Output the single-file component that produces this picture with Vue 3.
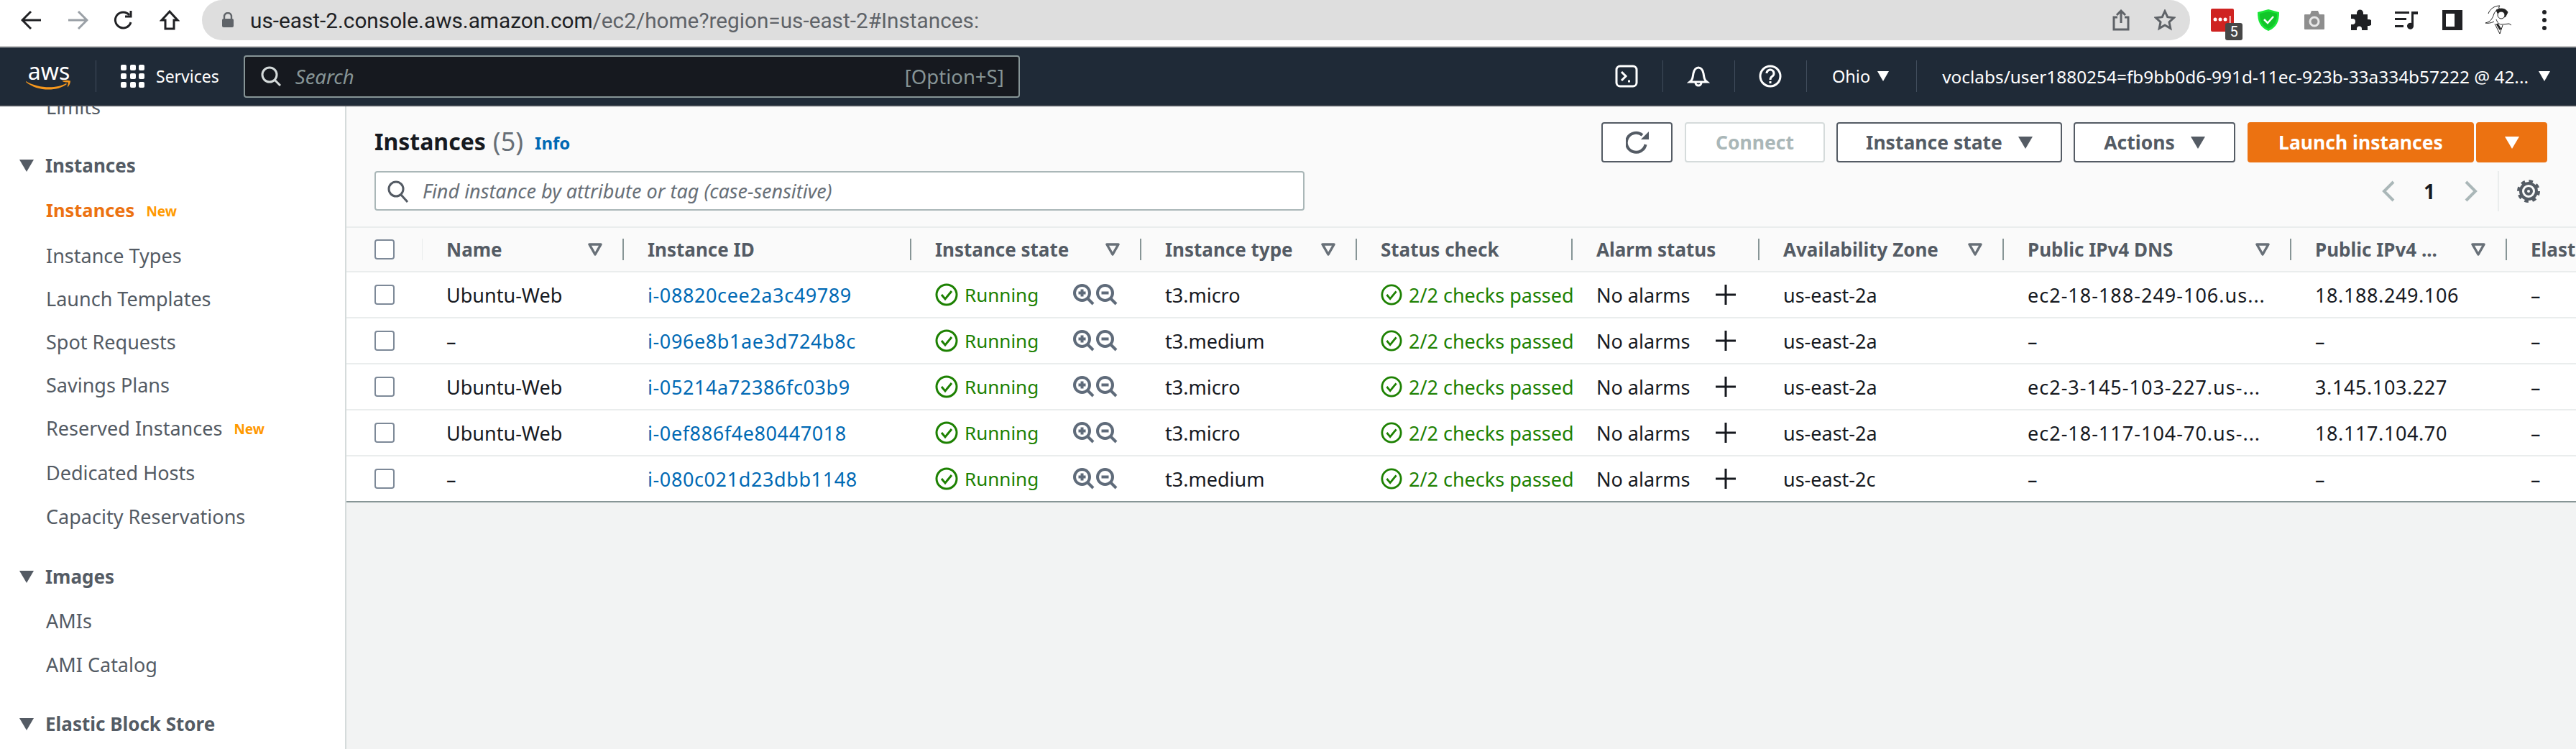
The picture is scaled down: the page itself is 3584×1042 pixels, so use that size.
<script setup>
const nav = [
  { t: 'Limits', k: 'item', m: -30 },
  { t: 'Instances', k: 'head', m: 22 },
  { t: 'Instances', k: 'item active', m: 2, isNew: true },
  { t: 'Instance Types', k: 'item', m: 3 },
  { t: 'Launch Templates', k: 'item', m: 0 },
  { t: 'Spot Requests', k: 'item', m: 0 },
  { t: 'Savings Plans', k: 'item', m: 0 },
  { t: 'Reserved Instances', k: 'item', m: 0, isNew: true },
  { t: 'Dedicated Hosts', k: 'item', m: 2 },
  { t: 'Capacity Reservations', k: 'item', m: 1 },
  { t: 'Images', k: 'head', m: 24 },
  { t: 'AMIs', k: 'item', m: 1 },
  { t: 'AMI Catalog', k: 'item', m: 1 },
  { t: 'Elastic Block Store', k: 'head', m: 23 },
]
const cols = [
  { t: 'Name', f: true },
  { t: 'Instance ID' },
  { t: 'Instance state', f: true },
  { t: 'Instance type', f: true },
  { t: 'Status check' },
  { t: 'Alarm status' },
  { t: 'Availability Zone', f: true },
  { t: 'Public IPv4 DNS', f: true },
  { t: 'Public IPv4 ...', f: true },
  { t: 'Elastic IP' },
]
const rows = [
  { name: 'Ubuntu-Web', id: 'i-08820cee2a3c49789', type: 't3.micro', az: 'us-east-2a', dns: 'ec2-18-188-249-106.us...', ip: '18.188.249.106' },
  { name: '–', id: 'i-096e8b1ae3d724b8c', type: 't3.medium', az: 'us-east-2a', dns: '–', ip: '–' },
  { name: 'Ubuntu-Web', id: 'i-05214a72386fc03b9', type: 't3.micro', az: 'us-east-2a', dns: 'ec2-3-145-103-227.us-...', ip: '3.145.103.227' },
  { name: 'Ubuntu-Web', id: 'i-0ef886f4e80447018', type: 't3.micro', az: 'us-east-2a', dns: 'ec2-18-117-104-70.us-...', ip: '18.117.104.70' },
  { name: '–', id: 'i-080c021d23dbb1148', type: 't3.medium', az: 'us-east-2c', dns: '–', ip: '–' },
]
</script>

<template>
  <div class="page">
    <div class="chrome">
      <div class="slot"><svg width="30" height="28" viewBox="0 0 30 28" class="ic"><path d="M28 14H3M14 2 2 14l12 12" /></svg></div>
      <div class="slot"><svg width="30" height="28" viewBox="0 0 30 28" class="ic dim"><path d="M2 14h25M16 2l12 12-12 12" /></svg></div>
      <div class="slot"><svg width="30" height="30" viewBox="0 0 30 30" class="ic"><path d="M25 18a11 11 0 1 1-2-10" /><path d="M25 2v8h-8" /></svg></div>
      <div class="slot"><svg width="28" height="30" viewBox="0 0 28 30" class="ic"><path d="M14 3 3 15h5v12h12V15h5z" /></svg></div>
      <div class="urlbar">
        <svg width="18" height="22" viewBox="0 0 18 22" class="lock"><path d="M4 9V6a5 5 0 0 1 10 0v3" fill="none" stroke="#5f6368" stroke-width="2.4" /><rect x="1" y="9" width="16" height="12" rx="2" fill="#5f6368" /></svg>
        <span class="url"><span class="host">us-east-2.console.aws.amazon.com</span>/ec2/home?region=us-east-2#Instances:</span>
        <span class="grow"></span>
        <svg width="26" height="30" viewBox="0 0 26 30" class="ic gray"><path d="M8 11H3v17h20V11h-5M13 19V2M7 8l6-6 6 6" /></svg>
        <svg width="30" height="30" viewBox="0 0 30 30" class="ic gray star"><path d="m15 2.500 3.700 8.200 8.800 1-6.500 6 1.800 8.800L15 22l-7.800 4.500L9 17.700l-6.500-6 8.800-1z" /></svg>
      </div>
      <div class="ext">
        <div class="slot">
          <div class="lp">
            <svg width="32" height="32" viewBox="0 0 32 32" fill="#fff"><circle cx="6" cy="15" r="2.500" /><circle cx="13" cy="15" r="2.500" /><circle cx="20" cy="15" r="2.500" /><rect x="26" y="10" width="1.500" height="10" /></svg>
            <span class="badge">5</span>
          </div>
        </div>
        <div class="slot"><svg width="32" height="32" viewBox="0 0 32 32"><path d="M16 1 31 5c0 12-3 21-15 26C4 26 1 17 1 5z" fill="#19e637" /><path d="M16 4 28 7c0 10-3 17-12 21C7 24 4 17 4 7z" fill="#12c52a" /><path d="m10 15 5 5 8-9" fill="none" stroke="#fff" stroke-width="2.500" /></svg></div>
        <div class="slot"><svg width="30" height="28" viewBox="0 0 30 28"><path d="M2 6h7l2-5h9l2 5h6a1 1 0 0 1 1 1v19a1 1 0 0 1-1 1H2a1 1 0 0 1-1-1V7a1 1 0 0 1 1-1z" fill="#8e8e8e" /><circle cx="15" cy="16" r="6" fill="none" stroke="#e8e8e8" stroke-width="3" /></svg></div>
        <div class="slot"><svg width="30" height="30" viewBox="0 0 30 30"><path d="M2 7h8V5a4.500 4.500 0 0 1 9 0v2h6v7h2a4.500 4.500 0 0 1 0 9h-2v6h-8v-2a3.500 3.500 0 0 0-7 0v2H2v-8h2a4 4 0 0 0 0-8H2z" fill="#202124" /></svg></div>
        <div class="slot"><svg width="32" height="26" viewBox="0 0 32 26" fill="#202124"><rect y="1" width="20" height="3" /><rect y="10" width="16" height="3" /><rect y="20" width="12" height="3" /><path d="M23 1h9v4h-6v16a4.500 4.500 0 1 1-3-4z" /></svg></div>
        <div class="slot"><svg width="28" height="28" viewBox="0 0 28 28"><rect x="2.500" y="2.500" width="23" height="23" fill="none" stroke="#202124" stroke-width="5" /><rect x="17" y="2" width="9" height="24" fill="#202124" /></svg></div>
        <div class="slot"><svg width="38" height="42" viewBox="0 0 38 42" fill="none" stroke="#222" stroke-width="1"><path d="M5 12C7 6 13 1 21 1c-3 3 0 5 3 6-5-1-9 0-11 5-2 6-4 11-12 13 5 1 10-1 12-2" /><path d="M16 7c5-3 13-3 16 3l-3 6-4 2-5-2z" fill="#222" /><circle cx="23" cy="14" r="5" fill="#fff" /><path d="M16 20c2 5 4 7 8 7l10-1 3 2M14 26l7 14 4-12" /><path d="M17 26c2 3 3 5 5 8" stroke-width="3" /></svg></div>
        <div class="slot"><div class="dots"><i></i><i></i><i></i></div></div>
      </div>
    </div>

    <header class="hdr">
      <div class="aws">
        <span class="aws-t">aws</span>
        <svg width="64" height="15" viewBox="0 0 64 15" fill="#f7981d"><path d="M0 2c17 10 42 11 56 3l1 1C43 17 15 16 0 3z" /><path d="M50 1.500c4-1 9-1 12 0 0 3-2 7-4 9 0-3 1-5 1-7-3 0-6 0-9-2z" /></svg>
      </div>
      <div class="hsep big"></div>
      <div class="grid9"><i v-for="n in 9" :key="n"></i></div>
      <span class="services">Services</span>
      <div class="hsearch">
        <svg width="28" height="28" viewBox="0 0 28 28" fill="none" stroke="#d5dbdb" stroke-width="3"><circle cx="12" cy="12" r="10" /><path d="m19 19 8 8" /></svg>
        <span class="hph">Search</span>
        <span class="grow"></span>
        <span class="hkey">[Option+S]</span>
      </div>
      <span class="grow"></span>
      <svg class="hicon" width="32" height="32" viewBox="0 0 32 32" fill="none" stroke="#fff" stroke-width="3"><rect x="2" y="2" width="28" height="28" rx="5" /><path d="m9 10 6 6-6 6M18 23h3" /></svg>
      <div class="hsep s1"></div>
      <svg class="hicon" width="32" height="32" viewBox="0 0 32 32" fill="none" stroke="#fff" stroke-width="3"><path d="M4 24c4-3 4-6 5-12 1-5 4-8 7-8s6 3 7 8c1 6 1 9 5 12z" /><path d="M12 25a4 4 0 0 0 8 0" /></svg>
      <div class="hsep s1"></div>
      <svg class="hicon" width="32" height="32" viewBox="0 0 32 32" fill="none" stroke="#fff" stroke-width="3"><circle cx="16" cy="16" r="14" /><path d="M11 12a5 5 0 1 1 8 4c-2 1.500-3 2-3 5M16 23v3" /></svg>
      <div class="hsep s3"></div>
      <span class="htxt ohio">Ohio</span><span class="hcaret first"></span>
      <div class="hsep s4"></div>
      <span class="htxt user">voclabs/user1880254=fb9bb0d6-991d-11ec-923b-33a334b57222 @ 42...</span><span class="hcaret"></span>
    </header>

    <div class="body">
      <aside class="side">
        <div v-for="(n, i) in nav" :key="i" class="nav" :class="n.k" :style="{ marginTop: n.m + 'px' }">
          <span v-if="n.k === 'head'" class="tri"></span>
          <span>{{ n.t }}</span>
          <span v-if="n.isNew" class="new">New</span>
        </div>
      </aside>

      <main class="main">
        <section class="top">
          <div class="tl">
            <div class="title"><h1>Instances</h1><span class="count">(5)</span><a class="info">Info</a></div>
            <div class="find">
              <svg width="32" height="32" viewBox="0 0 32 32" fill="none" stroke="#545b64" stroke-width="3"><circle cx="13" cy="13" r="10" /><path d="m20 21 9 10" /></svg>
              <span>Find instance by attribute or tag (case-sensitive)</span>
            </div>
          </div>
          <div class="tr">
            <div class="btns">
              <button class="btn refresh"><svg width="32" height="32" viewBox="0 0 32 32" fill="none"><path d="M27.500 19A13.500 13.500 0 1 1 23 6" stroke="#545b64" stroke-width="4" /><path d="M32 1v11H21z" fill="#545b64" /></svg></button>
              <button class="btn off connect">Connect</button>
              <button class="btn state">Instance state<span class="caret"></span></button>
              <button class="btn actions">Actions<span class="caret"></span></button>
              <button class="btn pri launch">Launch instances</button>
              <button class="btn pri drop"><span class="caret white"></span></button>
            </div>
            <div class="pager">
              <svg width="18" height="30" viewBox="0 0 18 30" fill="none" stroke="#aab7b8" stroke-width="4"><path d="M16 2 3 15l13 13" /></svg>
              <span class="pg">1</span>
              <svg width="18" height="30" viewBox="0 0 18 30" fill="none" stroke="#aab7b8" stroke-width="4"><path d="m2 2 13 13L2 28" /></svg>
              <div class="pdiv">
                <svg width="32" height="32" viewBox="0 0 32 32" fill="none" stroke="#545b64" stroke-width="4"><circle cx="16" cy="16" r="11" /><circle cx="16" cy="16" r="14" stroke-dasharray="5.500 5.500" /><circle cx="16" cy="16" r="4" /></svg>
              </div>
            </div>
          </div>
        </section>

        <section class="table">
          <div class="row thead">
            <div class="c chk"><span class="box"></span></div>
            <div v-for="c in cols" :key="c.t" class="c th">
              <span class="lbl">{{ c.t }}</span>
              <svg v-if="c.f" class="flt" width="20" height="18" viewBox="0 0 20 18" fill="none" stroke="#687078" stroke-width="3.500" stroke-linejoin="round"><path d="M2 2h16l-8 14z" /></svg>
            </div>
          </div>
          <div v-for="r in rows" :key="r.id" class="row tbody">
            <div class="c chk body-chk"><span class="box"></span></div>
            <div class="c">{{ r.name }}</div>
            <div class="c link">{{ r.id }}</div>
            <div class="c ok">
              <svg class="okic" width="32" height="32" viewBox="0 0 32 32" fill="none" stroke="#1d8102" stroke-width="3"><circle cx="16" cy="16" r="14" /><path d="m9 16 5 6 9-11" /></svg>
              <span class="oktxt run">Running</span>
              <svg class="zm first" width="30" height="30" viewBox="0 0 30 30" fill="none" stroke="#5f6b7a" stroke-width="4"><circle cx="12.500" cy="12.500" r="10.500" /><path d="m20 20 8 8M7.500 12.500h10M12.500 7.500v10" /></svg>
              <svg class="zm" width="30" height="30" viewBox="0 0 30 30" fill="none" stroke="#5f6b7a" stroke-width="4"><circle cx="12.500" cy="12.500" r="10.500" /><path d="m20 20 8 8M7.500 12.500h10" /></svg>
            </div>
            <div class="c">{{ r.type }}</div>
            <div class="c ok">
              <svg class="okic" width="30" height="32" viewBox="0 0 32 32" fill="none" stroke="#1d8102" stroke-width="3"><circle cx="16" cy="16" r="14" /><path d="m9 16 5 6 9-11" /></svg>
              <span class="oktxt">2/2 checks passed</span>
            </div>
            <div class="c alarm">
              <span>No alarms</span>
              <svg width="28" height="28" viewBox="0 0 28 28" stroke="#16191f" stroke-width="3"><path d="M14 0v28M0 14h28" /></svg>
            </div>
            <div class="c">{{ r.az }}</div>
            <div class="c dns">{{ r.dns }}</div>
            <div class="c ip">{{ r.ip }}</div>
            <div class="c">–</div>
          </div>
        </section>
      </main>
    </div>
  </div>
</template>

<style>
html, body { margin: 0; background: #fff; overflow: hidden; }
</style>

<style scoped>
.page { width: 3584px; height: 1042px; overflow: hidden; display: flex; flex-direction: column; font-family: "Noto Sans", sans-serif; color: #16191f; }
.grow { flex: 1; }

.chrome { height: 64px; flex: none; display: flex; padding-left: 12px; border-bottom: 2px solid #c4c4c4; background: #fff; box-sizing: content-box; }
.slot { width: 64px; height: 56px; flex: none; display: flex; align-items: center; justify-content: center; }
.ic { fill: none; stroke: #202124; stroke-width: 3; }
.ic.dim { stroke: #9aa0a6; }
.ic.gray { stroke: #5f6368; }
.star { margin-left: 33px; margin-right: 20px; }
.urlbar { flex: none; width: 2766px; height: 56px; margin-left: 13px; box-sizing: border-box; padding-left: 27px; display: flex; align-items: center; background: #dedede; border-radius: 28px; }
.lock { flex: none; }
.url { margin-left: 22px; font: 29.750px Roboto, sans-serif; color: #5f6368; white-space: nowrap; }
.host { color: #202124; }
.ext { display: flex; margin-left: -3px; padding-left: 16px; }
.lp { position: relative; width: 32px; height: 32px; background: #cf2321; border-radius: 2px; }
.lp svg { display: block; }
.badge { position: absolute; left: 20px; top: 20px; width: 24px; height: 24px; background: #474747; color: #fff; border-radius: 3px; font: 20px/24px Roboto, sans-serif; text-align: center; }
.dots { display: flex; flex-direction: column; gap: 5px; }
.dots i { width: 6px; height: 6px; border-radius: 50%; background: #202124; }

.hdr { height: 82px; box-sizing: border-box; flex: none; display: flex; align-items: center; background: #1f2a37; border-bottom: 2px solid #414750; color: #fff; padding: 0 36px 0 35px; }
.aws { width: 66px; display: flex; flex-direction: column; align-items: center; }
.aws-t { font: 400 32px/24px "Noto Sans", sans-serif; color: #fff; }
.aws svg { margin-top: 0; }
.hsep { width: 1px; height: 44px; background: #414d5c; flex: none; }
.hsep.big { margin: 0 34px 0 32px; }
.grid9 { width: 33px; display: grid; grid-template-columns: repeat(3, 8px); gap: 4px 4.500px; }
.grid9 i { height: 8px; background: #fff; border-radius: 2px; }
.services { margin-left: 16px; font-size: 23px; color: #fff; }
.hsearch { margin-left: 34px; width: 1080px; height: 59px; box-sizing: border-box; border: 2px solid #879596; border-radius: 4px; background: #16191f; display: flex; align-items: center; padding: 0 20px 0 22px; }
.hph { margin-left: 20px; font-style: italic; font-size: 27.500px; color: #879596; }
.hkey { font-size: 27.500px; color: #879596; }
.hicon { flex: none; }
.hsep.s1 { margin: 0 33px 0 34px; }
.hsep.s3 { margin: 0 35px 0 34px; }
.hsep.s4 { margin: 0 35px 0 38px; }
.htxt { font-size: 24.400px; color: #fff; white-space: nowrap; }
.ohio { font-size: 23.500px; }
.hcaret { width: 0; height: 0; margin-left: 14px; border-left: 8px solid transparent; border-right: 8px solid transparent; border-top: 14px solid #fff; flex: none; }
.hcaret.first { margin-left: 10px; }

.body { flex: 1; display: flex; min-height: 0; }
.side { width: 482px; flex: none; box-sizing: border-box; border-right: 2px solid #d5dbdb; background: #fff; overflow: hidden; }
.nav { height: 60px; display: flex; align-items: center; font-size: 27px; color: #545b64; white-space: nowrap; }
.nav.item { padding-left: 64px; }
.nav.head { padding-left: 27px; font-weight: 700; font-size: 26px; }
.nav.active { color: #ec7211; font-weight: 700; font-size: 25.500px; }
.tri { width: 0; height: 0; margin-right: 16px; border-left: 10px solid transparent; border-right: 10px solid transparent; border-top: 17px solid #545b64; }
.new { margin-left: 16px; font-size: 19px; font-weight: 700; color: #ff9900; margin-top: 4px; }

.main { flex: 1; min-width: 0; background: #f2f3f3; overflow: hidden; }
.top { height: 167px; box-sizing: border-box; background: #fafafa; padding: 22px 40px 0 39px; display: flex; justify-content: space-between; }
.tl { display: flex; flex-direction: column; }
.title { height: 56px; display: flex; align-items: center; transform: translateY(-2px); }
h1 { margin: 0; font-size: 32px; font-weight: 700; color: #16191f; }
.count { margin-left: 10px; font-size: 36px; color: #687078; }
.info { margin-left: 16px; font-size: 24px; font-weight: 700; color: #0069b4; margin-top: 4px; }
.find { margin-top: 12px; width: 1294px; height: 55px; box-sizing: border-box; border: 2px solid #aab7b8; border-radius: 4px; background: #fff; display: flex; align-items: center; padding-left: 15px; font-style: italic; font-size: 27px; color: #687078; gap: 18px; }
.tr { display: flex; flex-direction: column; align-items: flex-end; }
.btns { display: flex; height: 56px; }
.btn { box-sizing: border-box; height: 56px; border: 2px solid #545b64; border-radius: 4px; background: #fff; font: 700 26.500px "Noto Sans", sans-serif; color: #545b64; padding: 0; display: flex; align-items: center; justify-content: center; flex: none; }
.refresh { width: 99px; margin-right: 17px; }
.connect { width: 195px; margin-right: 16px; }
.off { border-color: #d5dbdb; color: #aab7b8; }
.state { width: 314px; margin-right: 16px; }
.actions { width: 225px; margin-right: 17px; }
.pri { background: #ec7211; border-color: #ec7211; color: #fff; }
.launch { width: 315px; margin-right: 3px; }
.drop { width: 99px; }
.caret { width: 0; height: 0; margin-left: 22px; border-left: 10px solid transparent; border-right: 10px solid transparent; border-top: 17px solid #545b64; }
.caret.white { margin-left: 0; border-top-color: #fff; }
.pager { margin-top: 12px; height: 56px; display: flex; align-items: center; }
.pg { margin: 0 41px 0 40px; font-size: 28px; font-weight: 700; }
.pdiv { margin-left: 28px; height: 56px; width: 69px; border-left: 2px solid #eaeded; display: flex; align-items: center; justify-content: flex-end; padding-right: 10px; box-sizing: border-box; }

.table { background: #fff; border-bottom: 2px solid #879596; }
.row { display: grid; grid-template-columns: 106px 280px 400px 320px 300px 300px 260px 340px 400px 300px 1fr; align-items: center; box-sizing: border-box; }
.thead { height: 64px; background: #fafafa; border-top: 2px solid #eaeded; border-bottom: 2px solid #eaeded; }
.tbody { height: 64px; border-bottom: 2px solid #eaeded; }
.tbody:last-child { height: 62px; border-bottom: 0; }
.c { box-sizing: border-box; padding-left: 33px; font-size: 27px; white-space: nowrap; overflow: hidden; display: flex; align-items: center; }
.chk { padding-left: 39px; height: 30px; overflow: visible; border-right: 1px solid #eaeded; }
.body-chk { border-right: 0; }
.box { width: 28px; height: 28px; box-sizing: border-box; border: 2px solid #7d8998; border-radius: 4px; background: #fff; flex: none; }
.th { height: 30px; overflow: visible; font-size: 26px; border-right: 2px solid #879596; font-weight: 700; color: #545b64; justify-content: space-between; padding-right: 28px; }
.th:last-child { border-right: 0; }
.flt { flex: none; }
.link { color: #0069b4; letter-spacing: 0.6px; }
.dns { letter-spacing: 1px; }
.ip { letter-spacing: 0.6px; }
.ok { color: #1d8102; }
.okic { flex: none; margin-right: 9px; }
.oktxt { color: #1d8102; }
.run { font-size: 26px; }
.zm { flex: none; }
.zm.first { margin-left: 48px; margin-right: 2px; }
.alarm { justify-content: flex-start; gap: 36px; }
.alarm svg { flex: none; }
</style>
